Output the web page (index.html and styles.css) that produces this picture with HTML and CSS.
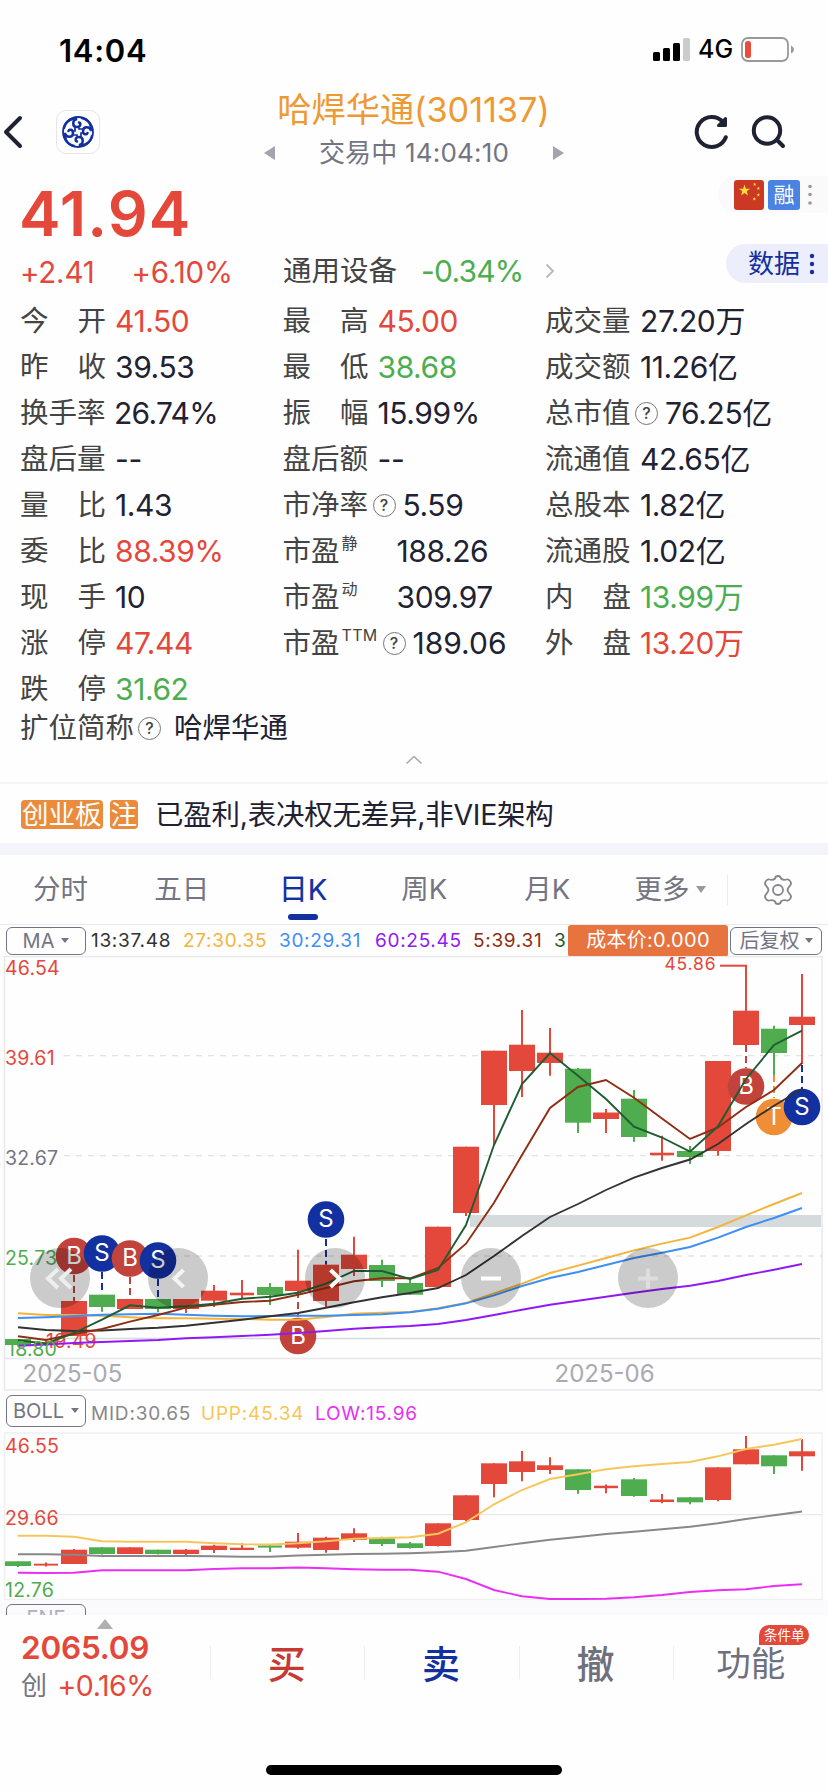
FILE: index.html
```html
<!DOCTYPE html>
<html lang="zh-CN">
<head>
    <meta charset="UTF-8">
    <meta name="viewport" content="width=device-width, initial-scale=1.0">
    <title>哈焊华通(301137)</title>
    <link rel="stylesheet" href="styles.css">
</head>

<body>
    <div class="status-bar">
        <span class="clock">14:04</span>
        <div class="status-icons">
            <svg width="38" height="24" viewBox="0 0 38 24">
                <rect x="0" y="14" width="7" height="9" rx="1.5"/>
                <rect x="10" y="10" width="7" height="13" rx="1.5"/>
                <rect x="20" y="5" width="7" height="18" rx="1.5"/>
                <rect x="30" y="0" width="7" height="23" rx="1.5" fill="#ccc"/>
            </svg>
            <span class="network">4G</span>
            <svg width="54" height="26" viewBox="0 0 54 26">
                <rect x="1" y="1" width="46" height="23" rx="6" fill="none" stroke="#999" stroke-width="1.8"/>
                <rect x="4" y="4" width="6" height="17" rx="2.5" fill="#eb4d3d"/>
                <path d="M50 8.5q3 1.5 3 4t-3 4z" fill="#999"/>
            </svg>
        </div>
    </div>

    <div class="nav">
        <svg class="back" width="24" height="40" viewBox="0 0 24 40">
            <path d="M20 6L6 20l14 14" fill="none" stroke="#1f2232" stroke-width="4" stroke-linecap="round" stroke-linejoin="round"/>
        </svg>
        <div class="broker">
            <svg width="34" height="34" viewBox="-17 -17 34 34" fill="none" stroke="#1230a0" stroke-linecap="round">
                <circle r="15" stroke-width="1.8"/>
                <g id="swirl" stroke-width="2.5">
                    <path d="M-14 -4C-12 -12 -5 -14 -1 -13C-6 -12 -6 -5 -1 -5C3 -5 3 -9 1 -9.500"/>
                    <path d="M-3 -4v3h-1" stroke-width="1.700"/>
                </g>
                <use href="#swirl" transform="rotate(90)"/>
                <use href="#swirl" transform="rotate(180)"/>
                <use href="#swirl" transform="rotate(270)"/>
            </svg>
        </div>
        <div class="title">
            <h1>哈焊华通(301137)</h1>
            <div class="session">
                <svg width="12" height="14" viewBox="0 0 12 14"><path d="M0 7L11 0v14z" fill="#a3a4ad"/></svg>
                <span>交易中 14:04:10</span>
                <svg width="12" height="14" viewBox="0 0 12 14"><path d="M12 7L1 0v14z" fill="#a3a4ad"/></svg>
            </div>
        </div>
        <div class="nav-actions">
            <svg width="36" height="36" viewBox="0 0 36 36" fill="none" stroke="#1f2232" stroke-width="4" stroke-linecap="round">
                <path d="M31.8 23.2A15 15 0 1 1 29 8"/>
                <path d="M31.5 4.5v7h-7z" fill="#1f2232" stroke-width="3" stroke-linejoin="round"/>
            </svg>
            <svg width="36" height="36" viewBox="0 0 36 36" fill="none" stroke="#1f2232" stroke-width="4" stroke-linecap="round">
                <circle cx="16" cy="16.500" r="13.200"/>
                <path d="M26.500 26.500l5.500 5.500"/>
            </svg>
        </div>
    </div>

    <div class="quote">
        <div class="quote-price">
            <div class="price">41.94</div>
            <div class="change"><span>+2.41</span><span>+6.10%</span></div>
        </div>
        <div class="industry">
            <span>通用设备</span>
            <span class="num down">-0.34%</span>
            <svg width="10" height="16" viewBox="0 0 10 16"><path d="M1.500 1.500L8 8l-6.500 6.500" fill="none" stroke="#b8b8bc" stroke-width="1.800"/></svg>
        </div>
        <div class="quote-side">
            <div class="flags">
                <svg width="30" height="30" viewBox="0 0 30 30">
                    <rect width="30" height="30" rx="3" fill="#cb3824"/>
                    <g fill="#fbdc3c">
                        <path id="star" d="M10.500 4.500l1.400 4.200h4.300l-3.500 2.600 1.300 4.200-3.500-2.600-3.500 2.600 1.300-4.200-3.500-2.600h4.300z"/>
                        <use href="#star" transform="translate(17.300 1) scale(.32)"/>
                        <use href="#star" transform="translate(21 5) scale(.32)"/>
                        <use href="#star" transform="translate(21 11.500) scale(.32)"/>
                        <use href="#star" transform="translate(17 15.500) scale(.32)"/>
                    </g>
                </svg>
                <span class="margin-badge">融</span>
                <svg width="4" height="22" viewBox="0 0 4 22" fill="#999"><circle cx="2" cy="2.500" r="1.800"/><circle cx="2" cy="10.500" r="1.800"/><circle cx="2" cy="19" r="1.800"/></svg>
            </div>
            <div class="data-btn">
                <span>数据</span>
                <svg width="6" height="22" viewBox="0 0 6 22" fill="#1230a0"><circle cx="3" cy="3" r="2.200"/><circle cx="3" cy="11" r="2.200"/><circle cx="3" cy="19" r="2.200"/></svg>
            </div>
        </div>
    </div>

    <div class="stats">
        <div class="stats-col">
            <div class="stat"><label><i>今</i><i>开</i></label><b class="up">41.50</b></div>
            <div class="stat"><label><i>昨</i><i>收</i></label><b>39.53</b></div>
            <div class="stat"><label>换手率</label><b class="rate">26.74%</b></div>
            <div class="stat"><label>盘后量</label><b>--</b></div>
            <div class="stat"><label><i>量</i><i>比</i></label><b>1.43</b></div>
            <div class="stat"><label><i>委</i><i>比</i></label><b class="up">88.39%</b></div>
            <div class="stat"><label><i>现</i><i>手</i></label><b>10</b></div>
            <div class="stat"><label><i>涨</i><i>停</i></label><b class="up">47.44</b></div>
            <div class="stat"><label><i>跌</i><i>停</i></label><b class="down">31.62</b></div>
        </div>
        <div class="stats-col">
            <div class="stat"><label><i>最</i><i>高</i></label><b class="up">45.00</b></div>
            <div class="stat"><label><i>最</i><i>低</i></label><b class="down">38.68</b></div>
            <div class="stat"><label><i>振</i><i>幅</i></label><b>15.99%</b></div>
            <div class="stat"><label>盘后额</label><b>--</b></div>
            <div class="stat"><label>市净率</label><span class="help">?</span><b>5.59</b></div>
            <div class="stat"><label class="pe">市盈<sup>静</sup></label><b>188.26</b></div>
            <div class="stat"><label class="pe">市盈<sup>动</sup></label><b>309.97</b></div>
            <div class="stat"><label class="ttm">市盈<sup>TTM</sup></label><span class="help">?</span><b>189.06</b></div>
        </div>
        <div class="stats-col">
            <div class="stat"><label>成交量</label><b>27.20万</b></div>
            <div class="stat"><label>成交额</label><b>11.26亿</b></div>
            <div class="stat"><label>总市值</label><span class="help">?</span><b>76.25亿</b></div>
            <div class="stat"><label>流通值</label><b>42.65亿</b></div>
            <div class="stat"><label>总股本</label><b>1.82亿</b></div>
            <div class="stat"><label>流通股</label><b>1.02亿</b></div>
            <div class="stat"><label><i>内</i><i>盘</i></label><b class="down">13.99万</b></div>
            <div class="stat"><label><i>外</i><i>盘</i></label><b class="up">13.20万</b></div>
        </div>
    </div>
    <div class="alias"><span>扩位简称</span><span class="help">?</span><b>哈焊华通</b></div>
    <div class="collapse">
        <svg width="18" height="10" viewBox="0 0 18 10"><path d="M1.500 8.500L9 1.500l7.500 7" fill="none" stroke="#aaa" stroke-width="1.600"/></svg>
    </div>

    <div class="notice">
        <span class="tag">创业板</span><span class="tag">注</span>
        <p>已盈利,表决权无差异,非VIE架构</p>
    </div>

    <div class="tabs">
        <span class="tab">分时</span>
        <span class="tab">五日</span>
        <span class="tab active">日K</span>
        <span class="tab">周K</span>
        <span class="tab month">月K</span>
        <span class="tab more">更多<svg width="10" height="7" viewBox="0 0 10 7"><path d="M0 0h10L5 7z" fill="#999"/></svg></span>
        <span class="settings">
            <svg width="30" height="30" viewBox="-15 -15 30 30" fill="none" stroke="#85858a" stroke-width="1.800" stroke-linejoin="round">
                <circle r="5"/>
                <path d="M-3 -11.500Q-2.500 -14 0 -14Q2.500 -14 3 -11.500Q5 -9.500 8.500 -10.500Q10.500 -11 12 -9Q14 -6.500 12 -4.300Q9.500 -1.500 9.500 0Q9.500 1.500 12 4.300Q14 6.500 12 9Q10.500 11 8.500 10.500Q5 9.500 3 11.500Q2.500 14 0 14Q-2.500 14 -3 11.500Q-5 9.500 -8.500 10.500Q-10.500 11 -12 9Q-14 6.500 -12 4.300Q-9.500 1.500 -9.500 0Q-9.500 -1.500 -12 -4.300Q-14 -6.500 -12 -9Q-10.500 -11 -8.500 -10.500Q-5 -9.500 -3 -11.500z"/>
            </svg>
        </span>
    </div>

    <div class="legend">
        <span class="picker">MA<svg width="8" height="5" viewBox="0 0 8 5"><path d="M0 0h8L4 5z"/></svg></span>
        <span class="ma ma13">13:37.48</span>
        <span class="ma ma27">27:30.35</span>
        <span class="ma ma30">30:29.31</span>
        <span class="ma ma60">60:25.45</span>
        <span class="ma ma5">5:39.31</span>
        <span class="ma ma3">3</span>
        <span class="cost">成本价:0.000</span>
        <span class="picker adjust">后复权<svg width="8" height="5" viewBox="0 0 8 5"><path d="M0 0h8L4 5z"/></svg></span>
    </div>
    <svg class="chart" id="kline" width="828" height="435" viewBox="0 957 828 435"></svg>

    <div class="legend legend-boll">
        <span class="picker">BOLL<svg width="8" height="5" viewBox="0 0 8 5"><path d="M0 0h8L4 5z"/></svg></span>
        <span class="boll mid">MID:30.65</span>
        <span class="boll upp">UPP:45.34</span>
        <span class="boll low">LOW:15.96</span>
    </div>
    <svg class="chart" id="boll" width="828" height="169" viewBox="0 1433 828 169"></svg>
    <div class="next-panel"><span class="picker">ENE</span></div>

    <div class="bottom-bar">
        <div class="index">
            <svg class="index-arrow" width="16" height="10" viewBox="0 0 16 10"><path d="M8 0l8 10H0z" fill="#b0b0b0"/></svg>
            <strong>2065.09</strong>
            <div class="index-change"><span>创</span><em>+0.16%</em></div>
        </div>
        <div class="action buy">买</div>
        <div class="action sell">卖</div>
        <div class="action">撤</div>
        <div class="action func">功能<span class="bubble">条件单</span></div>
    </div>
    <div class="home-indicator"></div>

    <script src="script.js"></script>
</body>
</html>
```

FILE: styles.css
```css
* {
    box-sizing: border-box;
}

body {
    margin: 0;
    width: 828px;
    height: 1792px;
    overflow: hidden;
    background: #fefefe;
    color: #1f2232;
    font-family: Inter, "Noto Sans CJK SC", sans-serif;
    font-size: 28.5px;
    line-height: 1;
}

svg {
    display: block;
    flex: none;
}

i, em {
    font-style: normal;
}

.up {
    color: #e4483a !important;
}

.down {
    color: #4cae50 !important;
}

/* Status bar */
.status-bar {
    display: flex;
    justify-content: space-between;
    height: 86px;
    padding: 36px 33px 0 59px;
    color: #000;
}

.clock {
    font-size: 31px;
    font-weight: 600;
    line-height: 29px;
    letter-spacing: 0.7px;
}

.status-icons {
    display: flex;
    align-items: center;
    height: 27px;
}

.network {
    width: 50px;
    padding-left: 7px;
    font-size: 25px;
    font-weight: 500;
    letter-spacing: 0;
}

/* Title row */
.nav {
    display: flex;
    height: 90px;
}

.back {
    margin-top: 26px;
}

.broker {
    width: 44px;
    height: 44px;
    margin: 24px 0 0 32px;
    padding: 4px;
    border: 1px solid #e6e6e6;
    border-radius: 10px;
}

.title {
    width: 310px;
    margin-left: 158px;
    text-align: center;
}

.title h1 {
    margin: 0;
    padding-left: 1px;
    font-size: 34.3px;
    font-weight: 400;
    line-height: 48px;
    white-space: nowrap;
    letter-spacing: -0.1px;
    color: #ed9a35;
}

.session {
    display: flex;
    align-items: center;
    justify-content: space-between;
    width: 300px;
    margin-left: 6px;
    font-size: 26px;
    line-height: 38px;
    letter-spacing: 0.2px;
    color: #747583;
}

.nav-actions {
    display: flex;
    gap: 21px;
    margin: 28px 0 0 126px;
}

/* Quote */
.quote {
    display: flex;
    height: 122px;
}

.quote-price {
    width: 283px;
    padding-left: 20px;
    color: #e4483a;
}

.price {
    margin-left: -1px;
    font-size: 62.5px;
    font-weight: 600;
    line-height: 74px;
    letter-spacing: 1.1px;
}

.change {
    display: flex;
    gap: 37px;
    font-size: 29.5px;
    line-height: 44px;
    letter-spacing: -0.2px;
}

.industry {
    display: flex;
    align-items: center;
    width: 435px;
    height: 44px;
    margin-top: 73px;
    color: #444;
}

.industry .num {
    width: 124px;
    margin-left: 24px;
    font-size: 30px;
    letter-spacing: -0.8px;
}

.quote-side {
    display: flex;
    flex-direction: column;
    align-items: flex-end;
    gap: 31px;
    width: 110px;
}

.flags {
    display: flex;
    align-items: center;
    width: 110px;
    height: 37px;
    padding-left: 16px;
    border-radius: 19px 0 0 19px;
    background: #fafafa;
}

.margin-badge {
    width: 32px;
    margin: 0 8px 0 4px;
    border-radius: 3px;
    background: #4a83e2;
    color: #fff;
    font-size: 21px;
    line-height: 30px;
    text-align: center;
}

.data-btn {
    display: flex;
    align-items: center;
    gap: 9px;
    width: 102px;
    height: 39px;
    padding-left: 22px;
    border-radius: 20px 0 0 20px;
    background: #eceefb;
    color: #1230a0;
    font-size: 26px;
}

/* Stats grid */
.stats {
    display: flex;
    height: 414px;
    padding-left: 20px;
}

.stats-col {
    width: 262.5px;
}

.stat {
    display: flex;
    align-items: center;
    height: 46px;
    white-space: nowrap;
    color: #444;
}

.stat label {
    display: flex;
    justify-content: space-between;
    width: 86px;
}

.stat b, .alias b {
    margin-left: 9px;
    font-size: 30px;
    font-weight: 400;
    letter-spacing: -0.4px;
    color: #1f2232;
}

.stat b.rate {
    margin-left: 8px;
    letter-spacing: -0.7px;
}

.stat label.pe {
    justify-content: flex-start;
    width: 105px;
}

.stat label.ttm {
    justify-content: flex-start;
    width: 96px;
}

.stat sup {
    align-self: flex-start;
    margin: -2px 0 0 2px;
    font-size: 16px;
    letter-spacing: 0.3px;
}

.help {
    width: 23px;
    height: 23px;
    margin-left: 4px;
    border: 1.5px solid #777;
    border-radius: 50%;
    font-size: 16px;
    font-weight: 500;
    line-height: 20px;
    text-align: center;
    color: #444;
}

.help + b {
    margin-left: 7px;
}

.alias {
    display: flex;
    align-items: center;
    height: 32px;
    padding-left: 20px;
    color: #444;
}

.alias b {
    margin-left: 13px;
    font-size: 28.5px;
    letter-spacing: 0;
}

.ttm ~ b {
    letter-spacing: 0;
}

.collapse {
    display: flex;
    justify-content: center;
    height: 38px;
    padding-top: 11px;
}

/* Listing board notice */
.notice {
    display: flex;
    align-items: center;
    height: 73px;
    padding: 1px 0 0 21px;
    border-top: 2px solid #f4f4f5;
    border-bottom: 12px solid #f3f5fa;
}

.tag {
    height: 29px;
    margin-right: 7px;
    padding: 0 1px;
    border-radius: 4px;
    background: #eb8c3d;
    color: #fff;
    font-size: 26.5px;
    line-height: 28px;
}

.notice p {
    margin: 2px 0 0 10px;
    letter-spacing: -0.25px;
}

/* Period tabs */
.tabs {
    display: flex;
    align-items: center;
    height: 70px;
    border-bottom: 1px solid #e9eaee;
    font-size: 27.5px;
    color: #747583;
}

.tab {
    position: relative;
    width: 121.2px;
    text-align: center;
}

.tab.active {
    color: #1230a0;
    font-size: 29px;
    -webkit-text-stroke: 0.2px #1230a0;
}

.tab.active::after {
    content: "";
    position: absolute;
    left: 46px;
    bottom: -16px;
    width: 30px;
    height: 6px;
    border-radius: 3px;
    background: #1230a0;
}

.tab.month {
    padding-left: 4px;
}

.tab.more {
    display: flex;
    align-items: center;
    justify-content: center;
    gap: 6px;
    padding-left: 7px;
}

.settings {
    display: flex;
    flex: 1;
    justify-content: center;
    border-left: 1px solid #ececf0;
}

/* Indicator legends */
.legend {
    display: flex;
    align-items: center;
    height: 31px;
    padding-left: 6px;
    font-size: 19px;
}

.picker {
    display: flex;
    align-items: center;
    justify-content: center;
    gap: 7px;
    width: 80px;
    height: 28px;
    border: 1.5px solid #747583;
    border-radius: 6px;
    font-size: 20px;
    color: #747583;
}

.picker svg {
    fill: #747583;
}

.ma {
    width: 96px;
    padding-left: 5px;
    letter-spacing: 0.7px;
    white-space: nowrap;
}

.ma13 {
    width: 92px;
    color: #333;
}

.ma27 {
    color: #f3b43c;
}

.ma30 {
    color: #3d8ff5;
}

.ma60 {
    width: 98px;
    color: #9019f5;
}

.ma5 {
    width: 86px;
    color: #8f2e12;
}

.ma3 {
    width: 14px;
    padding-left: 0;
    color: #1f5c33;
}

.cost {
    width: 160px;
    height: 32px;
    border-radius: 3px;
    background: #e7733f;
    color: #fff;
    font-size: 20px;
    line-height: 31px;
    letter-spacing: 0.3px;
    text-align: center;
}

.adjust {
    width: 92px;
    margin-left: 2px;
    gap: 5px;
}

.legend-boll {
    height: 41px;
}

.legend-boll .picker {
    height: 32px;
    margin-bottom: 2px;
}

.boll {
    padding: 3px 0 0 5px;
    letter-spacing: 0.8px;
    white-space: nowrap;
}

.mid {
    width: 110px;
    color: #888;
}

.upp {
    width: 114px;
    color: #f6c65a;
}

.low {
    color: #ea2ff5;
}

/* Charts */
.chart text {
    font-size: 19.5px;
    letter-spacing: 0.2px;
}

.chart .peak {
    font-size: 17.5px;
    letter-spacing: 0.8px;
}

.chart .axis-date {
    font-size: 24px;
    fill: #a9aab2;
    letter-spacing: 0;
}

.chart .marker {
    font-size: 24px;
    fill: #fff;
    letter-spacing: 0;
    text-anchor: middle;
}

.next-panel {
    height: 14px;
    padding: 3px 0 0 6px;
    overflow: hidden;
    background: #fafafc;
}

.next-panel .picker {
    color: #b0b1b9;
}

/* Bottom trade bar */
.bottom-bar {
    display: flex;
    height: 150px;
    background: #fefefe;
}

.index {
    width: 210px;
    padding: 4px 0 0 21px;
    color: #e4483a;
}

.index-arrow {
    margin-left: 76px;
}

.index strong {
    display: block;
    font-size: 31.5px;
    font-weight: 600;
    line-height: 38px;
    letter-spacing: -0.2px;
}

.index-change {
    display: flex;
    align-items: center;
    gap: 11px;
    font-size: 28.5px;
    line-height: 38px;
    letter-spacing: -0.5px;
}

.index-change span {
    font-size: 26px;
    color: #747583;
}

.action {
    position: relative;
    width: 154.4px;
    height: 33px;
    margin-top: 31px;
    padding-right: 2px;
    border-left: 1px solid #ededf1;
    font-size: 38px;
    font-weight: 500;
    line-height: 36px;
    text-align: center;
    color: #6f707d;
}

.buy {
    color: #c53a33;
}

.sell {
    color: #1230a0;
}

.func {
    padding-right: 0;
    font-size: 34.5px;
    font-weight: 400;
}

.bubble {
    position: absolute;
    left: 85px;
    top: -21px;
    width: 50px;
    height: 20px;
    border-radius: 10px 10px 10px 0;
    background: #e4483a;
    color: #fff;
    font-size: 13.5px;
    line-height: 20px;
}

.home-indicator {
    width: 296px;
    height: 10px;
    margin: 0 auto;
    border-radius: 5px;
    background: #000;
}
```

FILE: script.js
```js
const RED = "#e4483a";
const GREEN = "#4fac4f";
const STEP = 28;
const FIRST = 18;

// [color, high, body top, body bottom, low]
const klines = [
    ["g", 1340, 1340, 1346, 1346], ["r", 1341, 1343, 1345, 1347], ["r", 1302, 1302, 1337, 1337],
    ["g", 1295.7, 1295.7, 1308, 1312.7], ["r", 1300, 1300, 1310, 1310], ["g", 1300, 1300, 1310, 1313],
    ["r", 1300, 1300, 1310, 1314], ["r", 1286, 1291.7, 1301.7, 1308], ["r", 1281, 1293.7, 1296.3, 1299],
    ["g", 1284, 1288, 1296, 1306], ["r", 1250.7, 1281.7, 1292, 1292], ["r", 1261.7, 1265.7, 1302, 1309],
    ["r", 1237.7, 1255.7, 1270, 1277], ["g", 1260.7, 1266, 1282, 1288], ["g", 1280, 1284, 1295.7, 1296],
    ["r", 1227.7, 1227.7, 1288, 1288], ["r", 1147.7, 1147.7, 1214, 1217], ["r", 1051.7, 1051.7, 1106, 1146],
    ["r", 1011, 1045.7, 1072, 1098], ["r", 1029, 1053.7, 1064, 1076.7], ["g", 1069, 1069.7, 1123.7, 1134],
    ["r", 1110, 1113.5, 1120, 1134], ["g", 1091, 1099.7, 1138, 1142.7], ["r", 1136.7, 1153.7, 1156.3, 1161.7],
    ["g", 1147, 1152, 1158, 1165], ["r", 1062, 1062, 1152, 1156.7], ["r", 966.7, 1011.7, 1046, 1046],
    ["g", 1026.7, 1029.7, 1054, 1076], ["r", 975, 1017.7, 1026, 1065]
];

const bollKlines = [
    ["g", 1562.3, 1562.3, 1567, 1568], ["r", 1563.5, 1564.7, 1566.6, 1567.5], ["r", 1550, 1550.7, 1565, 1565],
    ["g", 1548.3, 1548.3, 1555, 1555.6], ["r", 1548.3, 1548.3, 1555, 1555], ["g", 1550.7, 1550.7, 1555, 1555.6],
    ["r", 1550, 1550.7, 1555, 1556], ["r", 1545.7, 1546.7, 1551, 1554], ["r", 1544.3, 1548.7, 1551, 1551],
    ["g", 1546, 1546.5, 1548.6, 1553], ["r", 1534, 1542.7, 1548.7, 1549.7], ["r", 1537.7, 1538.7, 1551, 1553.7],
    ["r", 1529.3, 1534.3, 1541, 1543], ["g", 1537.7, 1539.3, 1545, 1547], ["g", 1543, 1544.3, 1549, 1549.5],
    ["r", 1524.3, 1524.3, 1547, 1547.5], ["r", 1496.3, 1496.3, 1521, 1522.3], ["r", 1464.3, 1464.3, 1485, 1498.3],
    ["r", 1452, 1462.3, 1473, 1482.3], ["r", 1458.3, 1466.3, 1471, 1475], ["g", 1470.3, 1470.3, 1491, 1494.7],
    ["r", 1485.5, 1486.7, 1489.2, 1494.3], ["g", 1479, 1480.3, 1497, 1497.7], ["r", 1495, 1500.5, 1503, 1504.3],
    ["g", 1498.3, 1498.3, 1503.3, 1505.3], ["r", 1468.3, 1468.3, 1501, 1502.3], ["r", 1437, 1450.3, 1465.3, 1465.3],
    ["g", 1456.3, 1456.3, 1467.3, 1475], ["r", 1440, 1452.3, 1457.3, 1471.7]
];

const averages = [
    ["#f3b43c", [1314.3, 1316, 1316, 1316.7, 1318.3, 1319.3, 1319.3, 1319.7, 1320, 1320.7, 1320.7, 1318, 1314.7, 1313.7, 1313, 1309.3, 1304, 1294.3, 1284.7, 1274, 1266.7, 1259, 1251.3, 1244.7, 1238.7, 1228, 1216.3, 1205, 1194]],
    ["#3d8ff5", [1319, 1318.3, 1317, 1315.7, 1315.3, 1314.7, 1315.7, 1316.7, 1317.3, 1317, 1316.7, 1316.7, 1316, 1315.3, 1313.3, 1309.7, 1304.3, 1296.3, 1287, 1279, 1273, 1266, 1259, 1253.7, 1248, 1238.7, 1228, 1219, 1209]],
    ["#9019f5", [1346.7, 1345.5, 1344, 1343, 1342, 1341, 1339.3, 1338.3, 1337, 1335.7, 1334, 1332, 1329.7, 1328.3, 1327, 1325, 1321, 1316, 1310.7, 1305.7, 1301.7, 1297.7, 1293.7, 1290, 1286.7, 1282, 1276, 1270.7, 1265]],
    ["#333", [1328.3, 1331, 1332, 1331.5, 1330, 1328.7, 1326.7, 1323.7, 1320.7, 1317.3, 1314, 1308.7, 1303.3, 1298.3, 1294, 1289, 1276, 1257, 1237, 1218, 1205, 1191, 1178.7, 1169, 1160.5, 1145, 1125, 1106.7, 1090]],
    ["#8f2e12", [1337.3, 1341, 1335, 1330, 1322.7, 1316, 1308.7, 1305.7, 1303, 1301.7, 1295.7, 1289, 1282.3, 1279.3, 1279.3, 1269, 1244.7, 1203.7, 1156, 1109, 1088, 1081, 1098.7, 1119.5, 1140, 1128.3, 1108, 1091, 1064]],
    ["#1f5c33", [1341.3, 1344.7, 1334, 1320.7, 1306.3, 1308.7, 1307.3, 1304.7, 1299.7, 1297.7, 1293.7, 1284.7, 1272, 1272, 1280, 1271, 1226, 1146, 1085, 1054, 1076.7, 1100, 1127.7, 1138.5, 1152.7, 1127.3, 1080, 1046, 1031.7]]
];

const bands = [
    ["#f6c65a", [1536.7, 1536.7, 1537.7, 1542.3, 1542.7, 1542.7, 1542.7, 1544.3, 1545.3, 1545.5, 1544.3, 1542.3, 1539.7, 1539, 1538.3, 1534.7, 1523.3, 1505.3, 1491, 1480, 1475.3, 1470.3, 1467.3, 1465, 1463, 1457.3, 1450, 1445.7, 1440]],
    ["#888", [1555.3, 1555.3, 1555.7, 1557, 1557, 1557, 1557, 1557.3, 1557.7, 1557.7, 1556.5, 1555.7, 1555, 1554.7, 1554.3, 1553.3, 1551.7, 1548, 1544.3, 1540.7, 1538, 1535, 1532.7, 1530.3, 1527.7, 1524.3, 1520, 1516.3, 1512.5]],
    ["#ea2ff5", [1573.7, 1574, 1573.7, 1571.3, 1571.3, 1571.3, 1571.3, 1570, 1569.3, 1569.3, 1568.5, 1569.3, 1570.3, 1570.7, 1570.7, 1572.7, 1580, 1591, 1597.3, 1600, 1600, 1599.7, 1598.3, 1596, 1593, 1591.3, 1590.3, 1587, 1585.3]]
];

// [index, center y, letter, color, leader start, leader end]
const markers = [
    [2, 1257, "B", "#c2423c", 1276, 1302],
    [3, 1254.5, "S", "#1230a0", 1273, 1295],
    [4, 1259.5, "B", "#c2423c", 1278, 1300],
    [5, 1261.5, "S", "#1230a0", 1280, 1300],
    [10, 1337, "B", "#c2423c", 1292, 1318],
    [11, 1220.5, "S", "#1230a0", 1240, 1265],
    [26, 1087.5, "B", "#c2423c", 1046, 1069],
    [27, 1118, "T", "#ef8e35", 1076, 1099],
    [28, 1108, "S", "#1230a0", 1066, 1090]
];

function x(i) {
    return FIRST + STEP * i;
}

function line(x1, y1, x2, y2, color, width = 1, extra = "") {
    return `<path d="M${x1} ${y1}L${x2} ${y2}" stroke="${color}" stroke-width="${width}" ${extra}/>`;
}

function text(tx, ty, value, color, cls = "") {
    return `<text x="${tx}" y="${ty}" fill="${color}" class="${cls}">${value}</text>`;
}

function candles(data) {
    return data.map(([c, high, top, bottom, low], i) => {
        const color = c === "r" ? RED : GREEN;
        const w = bottom - top < 3 ? 24 : 26;
        return line(x(i), high, x(i), low, color, 2) +
            `<rect x="${x(i) - w / 2}" y="${top}" width="${w}" height="${bottom - top}" fill="${color}"/>`;
    }).join("");
}

function curves(list) {
    return list.map(([color, ys]) =>
        `<polyline points="${ys.map((y, i) => `${x(i)},${y}`).join(" ")}" fill="none" stroke="${color}" stroke-width="1.9"/>`
    ).join("");
}

function badge([i, cy, letter, color, from, to]) {
    return line(x(i), from, x(i), to, color, 2, `stroke-dasharray="7 4"`) +
        `<circle cx="${x(i)}" cy="${cy}" r="18.3" fill="${color}"/>` +
        text(x(i), cy + 7.5, letter, "#fff", "marker");
}

function control(cx, icon, color) {
    return `<circle cx="${cx}" cy="1279" r="30" fill="#000" fill-opacity=".2"/>` +
        `<path d="${icon}" fill="none" stroke="${color}" stroke-width="4"/>`;
}

function drawKline() {
    let out = `<rect x="4.500" y="957.500" width="817.500" height="433.500" fill="none" stroke="#e6e8eb" stroke-width="1.500"/>`;
    out += line(4, 1359.5, 822, 1359.5, "#e6e8eb", 1.5);
    [1056.7, 1156.7, 1257].forEach(y => {
        out += line(64, y, 822, y, "#e3e3e3", 1.3, `stroke-dasharray="6 6"`);
    });
    out += line(30, 1339.5, 820, 1339.5, "#d5dadd", 1.3);
    out += `<rect x="470" y="1216" width="351" height="12" fill="#d5dadd"/>`;
    out += candles(klines);
    out += line(720, 966.7, 747, 966.7, RED, 2) + text(664.5, 970.5, "45.86", RED, "peak");
    out += line(46, 1343, 58, 1343, RED, 1.5) + text(46, 1348.5, "19.49", RED);

    // the latest and the lower badges lie under the curves
    out += markers.slice(6).map(badge).join("") + badge(markers[4]);
    out += curves(averages);
    out += markers.slice(0, 4).map(badge).join("") + badge(markers[5]);

    out += text(5, 976, "46.54", RED) + text(5, 1066, "39.61", RED) + text(5, 1166, "32.67", "#747583");
    out += text(5, 1266, "25.73", GREEN) + text(7, 1356.5, "18.80", GREEN);
    out += text(22.5, 1382.5, "2025-05", "", "axis-date") + text(554.5, 1382.5, "2025-06", "", "axis-date");

    out += control(60, "M58 1270l-10 9.500l10 9.500M71 1270l-10 9.500l10 9.500", "#eee");
    out += control(178, "M183.500 1271l-9 8.500l9 8.500", "#f4f4f4");
    out += control(335, "M330.500 1271l9 8.500l-9 8.500", "#fff");
    out += control(491, "M481 1279.500h20", "#fff");
    out += control(648, "M638 1279.500h20M648 1269.500v20", "#ddd");
    document.getElementById("kline").innerHTML = out;
}

function drawBoll() {
    let out = `<rect x="4.500" y="1434" width="817.500" height="166.500" fill="none" stroke="#eff0f1" stroke-width="1.500"/>`;
    out += line(4, 1515.7, 822, 1515.7, "#e8e9eb", 1.2);
    out += candles(bollKlines) + curves(bands);
    out += text(5, 1453.5, "46.55", RED) + text(5, 1525.5, "29.66", RED) + text(5, 1597.5, "12.76", GREEN);
    document.getElementById("boll").innerHTML = out;
}

drawKline();
drawBoll();
```
